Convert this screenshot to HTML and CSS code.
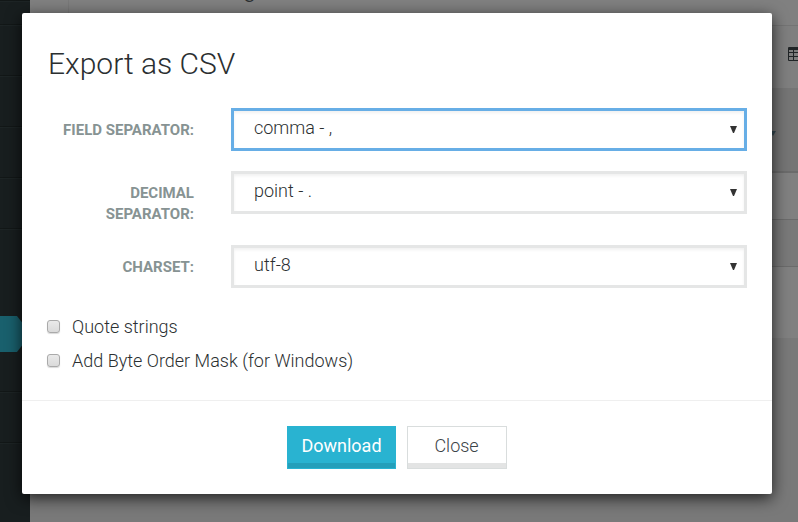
FILE: index.html
```
<!DOCTYPE html>
<html lang="en">
<head>
<meta charset="utf-8">
<title>Export as CSV</title>
<link rel="stylesheet" href="styles.css">
</head>
<body>
<div class="app">
  <nav class="sidebar">
    <div class="nav-item nav-first"></div>
    <div class="nav-item"></div>
    <div class="nav-item"></div>
    <div class="nav-item"></div>
    <div class="nav-item"></div>
    <div class="nav-item"></div>
    <div class="nav-current">
      <svg width="24" height="36" viewBox="0 0 24 36" aria-hidden="true"><path d="M0 0h17l7 9v18l-7 9H0z" fill="#19606d"/></svg>
    </div>
    <div class="nav-item"></div>
    <div class="nav-item"></div>
  </nav>
  <main class="page">
    <div class="page-title"><span>g</span></div>
    <div class="toolbar">
      <svg width="15" height="14" viewBox="0 0 15 14" aria-hidden="true"><rect width="15" height="14" rx="1" fill="#202426"/><path d="M1 3h4v2H1zM6 3h4v2H6zM11 3h3v2h-3zM1 6h4v3H1zM6 6h4v3H6zM11 6h3v3h-3zM1 10h4v3H1zM6 10h4v3H6zM11 10h3v3h-3z" fill="#7d7d7d"/></svg>
    </div>
    <div class="list-head">
      <svg width="6" height="5" viewBox="0 0 6 5" aria-hidden="true"><path d="M0 0h6L3 5z" fill="#344a53"/></svg>
    </div>
    <div class="list-row"></div>
    <div class="list-row shaded"></div>
    <div class="list-end"></div>
  </main>
</div>
<div class="overlay">
  <form class="dialog" role="dialog" aria-labelledby="title">
    <div class="dialog-body">
      <h1 id="title">Export as CSV</h1>
      <div class="field">
        <label for="field-sep">Field separator:</label>
        <div class="select active">
          <select id="field-sep"><option>comma - ,</option></select>
          <svg width="7" height="7" viewBox="0 0 7 7" aria-hidden="true"><path d="M0 0h7L4 7H3z" fill="#333"/></svg>
        </div>
      </div>
      <div class="field">
        <label for="decimal-sep">Decimal separator:</label>
        <div class="select">
          <select id="decimal-sep"><option>point - .</option></select>
          <svg width="7" height="7" viewBox="0 0 7 7" aria-hidden="true"><path d="M0 0h7L4 7H3z" fill="#333"/></svg>
        </div>
      </div>
      <div class="field">
        <label for="charset">Charset:</label>
        <div class="select">
          <select id="charset"><option>utf-8</option></select>
          <svg width="7" height="7" viewBox="0 0 7 7" aria-hidden="true"><path d="M0 0h7L4 7H3z" fill="#333"/></svg>
        </div>
      </div>
      <div class="checks">
        <label class="check"><input type="checkbox">Quote strings</label>
        <label class="check"><input type="checkbox">Add Byte Order Mask (for Windows)</label>
      </div>
    </div>
    <div class="dialog-footer">
      <button class="btn primary" type="button">Download</button>
      <button class="btn" type="button">Close</button>
    </div>
  </form>
</div>
</body>
</html>
```
FILE: styles.css
```
* { box-sizing: border-box; }

body {
  margin: 0;
  height: 100vh;
  overflow: hidden;
  font-family: Roboto, "Liberation Sans", sans-serif;
  font-weight: 300;
  font-size: 18px;
  color: #2b2f31;
  background: #797979;
}

svg { display: block; }

.app { display: flex; height: 100vh; }

.sidebar {
  flex: 0 0 30px;
  background: #181e1f;
  overflow: hidden;
}
.nav-item {
  height: 51px;
  border-top: 1px solid #121717;
  box-shadow: inset 0 1px #1d2425;
}
.nav-first { height: 24px; }
.nav-current { height: 112px; padding-top: 37px; }

.page { flex: 1; display: flex; flex-direction: column; }
.page-title {
  height: 25px;
  margin-left: 38px;
  border-left: 1px solid #797979;
  background: #808080;
  overflow: hidden;
}
.page-title span {
  display: block;
  margin: -27px 0 0 174px;
  font-size: 24px;
  line-height: 32px;
}
.page { background: linear-gradient(#808080 88px, #797979 88px); }
.toolbar {
  height: 63px;
  border-top: 1px solid #747474;
  display: flex;
  justify-content: flex-end;
  align-items: center;
  background: #7f7f7f;
}
.toolbar svg { margin-right: -5px; margin-bottom: 6px; }
.list-head {
  height: 83px;
  display: flex;
  justify-content: flex-end;
  align-items: center;
  padding: 8px 22px 0 0;
  background: #757575;
}
.list-row {
  height: 48px;
  border-top: 2px solid #6b6b6b;
  background: #808080;
}
.list-row.shaded { height: 47px; border-top-width: 1px; background: #797979; }
.list-end {
  height: 72px;
  border-top: 1px solid #6b6b6b;
  background: #808080;
}

.overlay {
  position: absolute;
  inset: 0;
  padding: 13px 26px 28px 22px;
}
.dialog {
  background: #fff;
  border-radius: 2px;
  box-shadow: 0 4px 16px rgba(0, 0, 0, .75);
}
.dialog-body { padding: 32px 25px 22px; }

h1 {
  margin: 0 0 25px;
  font-size: 30px;
  line-height: 38px;
  font-weight: 300;
}

.field {
  display: grid;
  grid-template-columns: 147px 1fr;
  column-gap: 37px;
  align-items: start;
  margin-bottom: 21px;
}
.field label {
  padding-top: 12px;
  font-size: 15px;
  line-height: 21px;
  font-weight: 700;
  text-align: right;
  text-transform: uppercase;
  color: #879393;
}
.field label + .select { margin-bottom: -1px; }
.select { position: relative; }
.select svg {
  position: absolute;
  right: 10px;
  top: 18px;
  pointer-events: none;
}
select {
  display: block;
  appearance: none;
  width: 100%;
  height: 43px;
  padding: 0 32px 4px 20px;
  border: 3px solid #e5e6e6;
  border-radius: 0;
  outline: 0;
  background: #fff;
  box-shadow: inset 0 2px 3px rgba(0, 0, 0, .06);
  font: inherit;
  color: inherit;
}
.active select { border-color: #67aee6; }
.field:nth-of-type(2) { margin-bottom: 20px; }

.checks { padding-top: 2px; }
.check {
  display: flex;
  align-items: center;
  gap: 12px;
  line-height: 34px;
}
.check input {
  appearance: none;
  width: 13px;
  height: 13px;
  margin: 0 0 2px;
  border: 1px solid #aaa;
  border-radius: 3px;
  background: linear-gradient(#eaeaea, #dadada);
  box-shadow: 0 1px 1px rgba(0, 0, 0, .15);
}

h1 { padding-left: 1px; }

.dialog-footer {
  display: flex;
  justify-content: center;
  gap: 11px;
  padding: 25px;
  border-top: 1px solid #efefef;
}
.btn {
  height: 43px;
  min-width: 100px;
  padding: 0 13px 4px;
  border: 1px solid #d9dddd;
  background: #fff;
  box-shadow: inset 0 -5px #e3e4e4;
  font: inherit;
  color: #3c4448;
}
.primary {
  border-color: #29b3d1;
  background: #29b3d1;
  box-shadow: inset 0 -5px #249fba;
  font-weight: 400;
  color: #fff;
}
```
